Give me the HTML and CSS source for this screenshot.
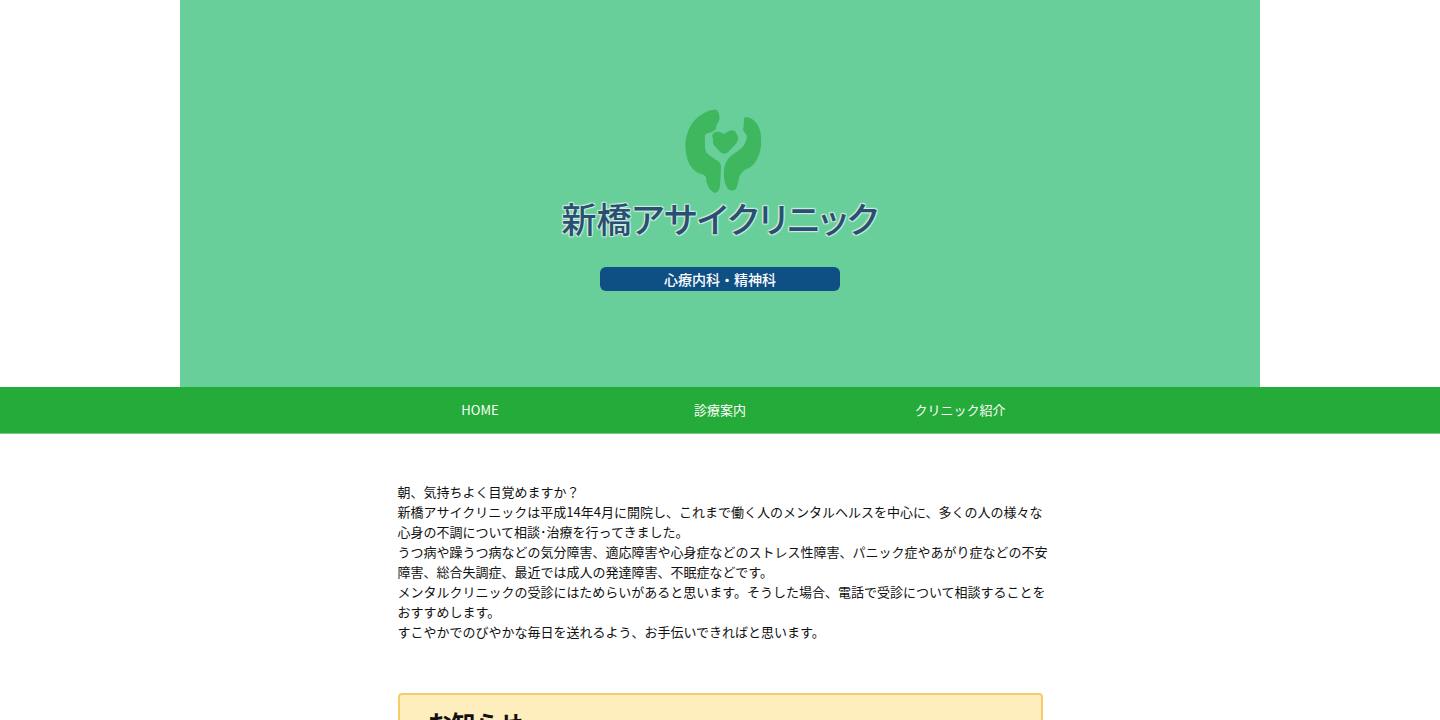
FILE: index.html
```
<!DOCTYPE html>
<html lang="ja">

<head>
    <meta charset="UTF-8">
    <meta name="viewport" content="width=device-width, initial-scale=1.0">
    <title>新橋アサイクリニック</title>
    <link rel="stylesheet" href="styles.css">
</head>

<body>
    <header class="hero">
        <svg class="logo" viewBox="0 0 100 100" aria-hidden="true">
            <path d="M45 9.5 Q48 10 49 14 Q50 18 49 21 Q46 24 46 29 Q43 32 38 33 Q34 34 35 39 L35 47 Q35 52 39 55 L46 60 Q51 62 51 67 L50 86 Q49 92 45 93 Q40 91 38 86 Q36 82 36 77 Q34 74 28 73 Q21 69 18 61 Q15 52 15.500 42 Q17 29 24 21 Q33 11 45 9.500 Z" />
            <path d="M75 17 Q82 17 87 24 Q91 30 91 38 Q92 50 87 59 Q84 66 77 69 Q71 71 69 78 Q68 85 66 89 Q63 92 58 89 Q54 83 54 76 Q53 66 58 59 Q61 55 68 51 Q76 46 77 36 L73 30 Q74 25 74 19 Z" />
            <path d="M42 36 C43 32 46 31 50 32 L54 34 L59 31 C63 29 66 31 67 35 C70 38 67 43 64 46 L59 51 C56 55 52 54 49 51 L44 45 C42 42 44 39 42 36 Z" />
        </svg>
        <h1 class="clinic-name">新橋アサイクリニック</h1>
        <p class="department">心療内科・精神科</p>
    </header>

    <nav class="nav">
        <ul class="nav-list">
            <li><a href="#">HOME</a></li>
            <li><a href="#">診療案内</a></li>
            <li><a href="#">クリニック紹介</a></li>
        </ul>
    </nav>

    <main class="container">
        <p class="intro">
            朝、気持ちよく目覚めますか？<br>
            新橋アサイクリニックは平成14年4月に開院し、これまで働く人のメンタルヘルスを中心に、多くの人の様々な<br>
            心身の不調について相談･治療を行ってきました。<br>
            うつ病や躁うつ病などの気分障害、適応障害や心身症などのストレス性障害、パニック症やあがり症などの不安<br>
            障害、総合失調症、最近では成人の発達障害、不眠症などです。<br>
            メンタルクリニックの受診にはためらいがあると思います。そうした場合、電話で受診について相談することを<br>
            おすすめします。<br>
            すこやかでのびやかな毎日を送れるよう、お手伝いできればと思います。
        </p>

        <section class="news">
            <h2>お知らせ</h2>
        </section>
    </main>
</body>

</html>
```

FILE: styles.css
```
* {
    box-sizing: border-box;
}

body {
    margin: 0;
    background-color: #fff;
    color: #111;
    font-family: "Noto Sans CJK JP", sans-serif;
}

.hero {
    display: flex;
    flex-direction: column;
    align-items: center;
    width: 75%;
    margin: 0 auto;
    padding: 100px 0 96px;
    background-color: #68ce9a;
}

.logo {
    width: 100px;
    height: 100px;
    fill: #3eb75e;
}

.clinic-name {
    margin: 0;
    color: #2b4f70;
    font-size: 35px;
    font-weight: 500;
    line-height: 36px;
    font-feature-settings: "palt";
    text-shadow: 1px 1px 1px #cdeee0, -1px -1px 1px #cdeee0, 1px -1px 1px #cdeee0, -1px 1px 1px #cdeee0;
}

.department {
    width: 240px;
    margin: 31px 0 0;
    border-radius: 6px;
    background-color: #0e4f84;
    color: #fff;
    font-size: 14px;
    font-weight: 500;
    line-height: 24px;
    text-align: center;
}

.nav {
    background-color: #25ab39;
    border-bottom: 1px solid #7bcc86;
}

.nav-list {
    display: grid;
    grid-template-columns: repeat(3, 1fr);
    width: 50%;
    margin: 0 auto;
    padding: 0;
    list-style: none;
}

.nav-list a {
    display: block;
    color: #fff;
    font-size: 13px;
    line-height: 46px;
    text-align: center;
    text-decoration: none;
}

.nav-list a:hover {
    background-color: #1e9431;
}

.container {
    max-width: 645px;
    margin: 0 auto;
    padding: 48px 0;
}

.intro {
    margin: 0 0 51px;
    font-size: 13px;
    line-height: 20px;
    white-space: nowrap;
}

.news {
    padding: 10px 28px 24px;
    border: 2px solid #f6cb6b;
    border-radius: 4px;
    background-color: #feedbd;
}

.news h2 {
    margin: 0;
    font-size: 24px;
    font-weight: 700;
    line-height: 36px;
}
```
